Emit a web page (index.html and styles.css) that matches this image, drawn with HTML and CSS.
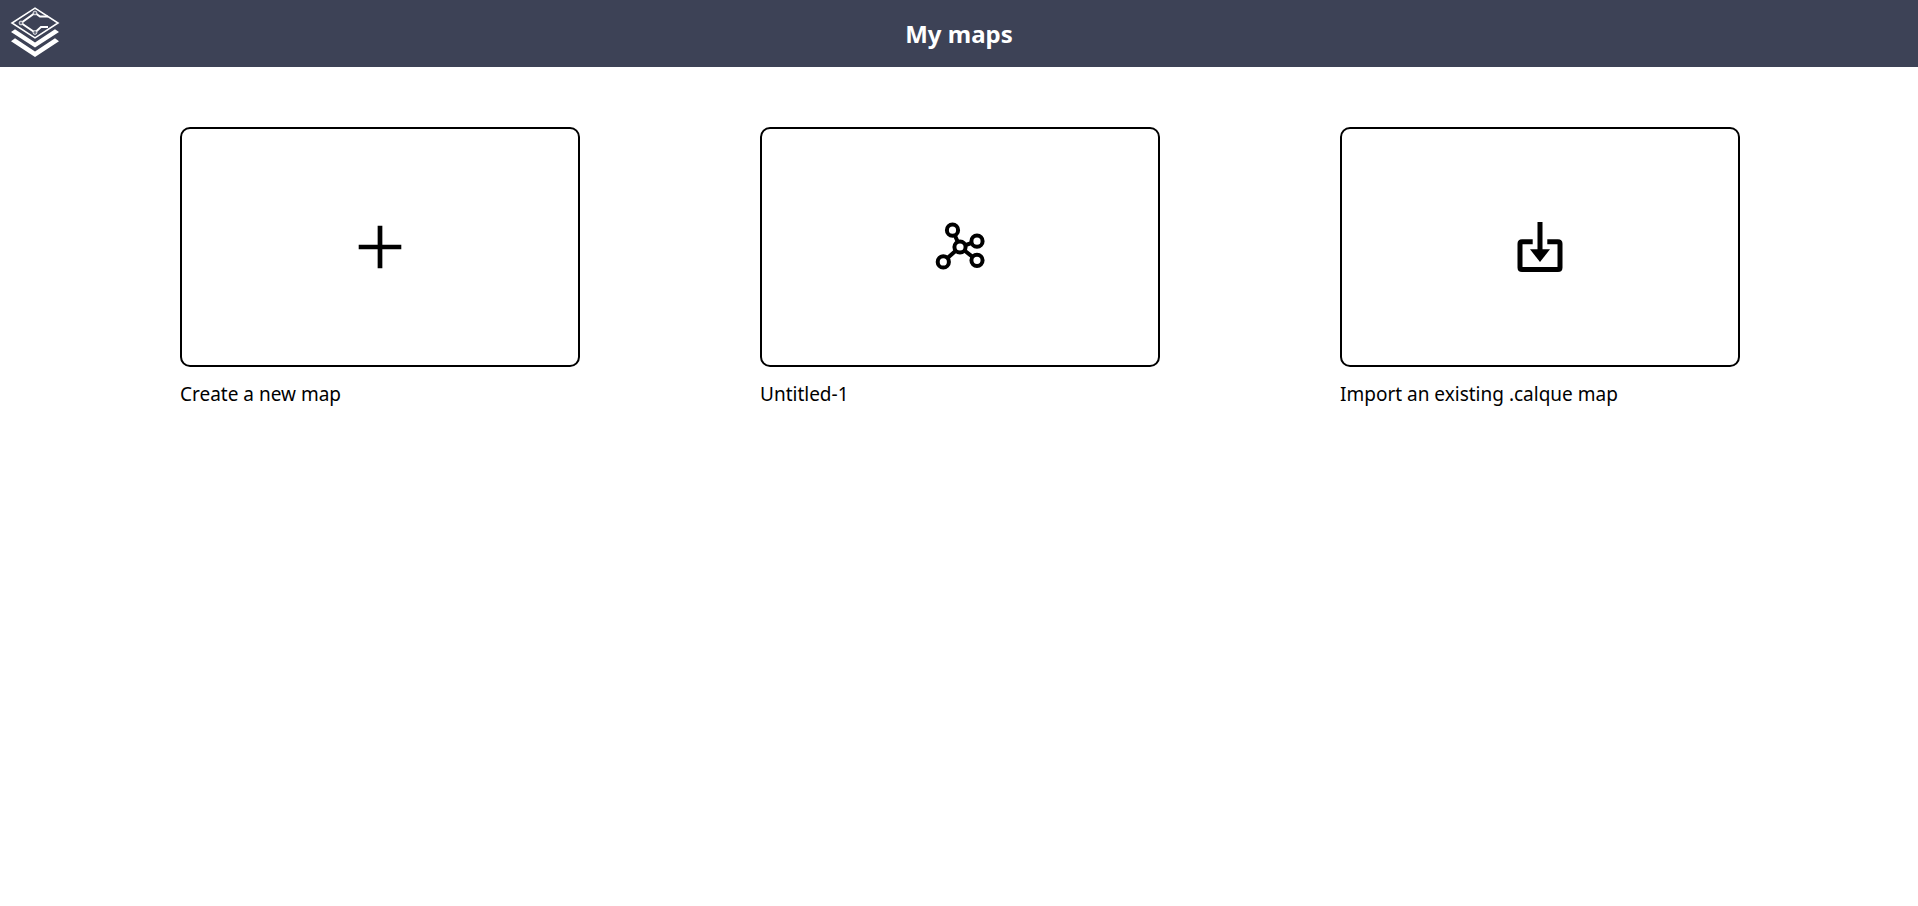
FILE: index.html
```html
<!DOCTYPE html>
<html lang="en">
<head>
<meta charset="utf-8">
<title>My maps</title>
<link rel="stylesheet" href="styles.css">
</head>
<body>
<header class="topbar">
  <a class="logo" href="#" aria-label="Calque home">
    <svg viewBox="0 0 50 53" width="50" height="53" aria-hidden="true">
      <path d="M25 1.200 48 16 25 30.800 2 16Z" fill="none" stroke="#fff" stroke-width="1.600"/>
      <path d="M11 16 25 6 30 9.500H38M38 20H31L25 25.500 11 16" fill="none" stroke="#fff" stroke-width="2"/>
      <g fill="#6e7283" stroke="#fff" stroke-width=".8"><circle cx="25" cy="6" r="1.900"/><circle cx="11" cy="16" r="1.900"/><circle cx="25" cy="25.500" r="1.900"/></g>
      <path d="M5 22.300 25 35.500 45 22.300 49 25 25 40.500 1 25ZM5 31.300 25 44.500 45 31.300 49 34.300 25 50 1 34.300Z" fill="#fff"/>
    </svg>
  </a>
  <h1 class="title">My maps</h1>
</header>
<main class="maps">
  <div class="map">
    <button class="card" type="button" aria-labelledby="create-label">
      <svg class="icon" viewBox="0 0 60 60" aria-hidden="true">
        <path d="M8.700 30H51.300M30 8.700V51.300" fill="none" stroke="#000" stroke-width="4.700"/>
      </svg>
    </button>
    <p class="label" id="create-label">Create a new map</p>
  </div>
  <div class="map">
    <button class="card" type="button" aria-labelledby="untitled-label">
      <svg class="icon" viewBox="0 0 60 60" aria-hidden="true">
        <path d="M30 30 22.500 13M30 30 47 24.200M30 30 47 43.300M30 30 13.300 44.700" stroke="#000" stroke-width="4"/>
        <g fill="#fff" stroke="#000" stroke-width="4">
          <circle cx="22.500" cy="13.200" r="5.600"/><circle cx="47" cy="24.200" r="5.600"/><circle cx="47" cy="43.300" r="5.600"/><circle cx="13.300" cy="44.900" r="5.600"/><circle cx="30" cy="30" r="5.600"/>
        </g>
      </svg>
    </button>
    <p class="label" id="untitled-label">Untitled-1</p>
  </div>
  <div class="map">
    <button class="card" type="button" aria-labelledby="import-label">
      <svg class="icon" viewBox="0 0 60 60" aria-hidden="true">
        <path d="M22.700 24.800H12Q10 24.800 10 26.800V50.500Q10 52.500 12 52.500H48Q50 52.500 50 50.500V26.800Q50 24.800 48 24.800H37.300M30 5V34" fill="none" stroke="#000" stroke-width="5"/>
        <path d="M20 32.300H40L30 45Z"/>
      </svg>
    </button>
    <p class="label" id="import-label">Import an existing .calque map</p>
  </div>
</main>
</body>
</html>
```
FILE: styles.css
```css
body {
  margin: 0;
  background: #fff;
  color: #000;
  font-family: "Segoe UI", "Noto Sans", "Open Sans", sans-serif;
}

.topbar {
  display: grid;
  grid-template-columns: 1fr auto 1fr;
  align-items: center;
  box-sizing: border-box;
  min-height: 67px;
  padding: 0 10px;
  background: #3d4256;
  color: #fff;
}

.logo {
  justify-self: start;
}

.logo svg {
  display: block;
}

.title {
  margin: 0;
  font-size: 24px;
  line-height: 36px;
  font-weight: 700;
}

.maps {
  display: flex;
  flex-wrap: wrap;
  gap: 60px 180px;
  padding: 60px 0 60px 180px;
}

.map {
  width: 400px;
}

.card {
  display: flex;
  align-items: center;
  justify-content: center;
  box-sizing: border-box;
  width: 100%;
  aspect-ratio: 5 / 3;
  padding: 0;
  border: 2px solid #000;
  border-radius: 10px;
  background: #fff;
  cursor: pointer;
}

.icon {
  width: 60px;
  height: 60px;
}

.label {
  margin: 13px 0 0;
  font-size: 19px;
  line-height: 28px;
}
```
